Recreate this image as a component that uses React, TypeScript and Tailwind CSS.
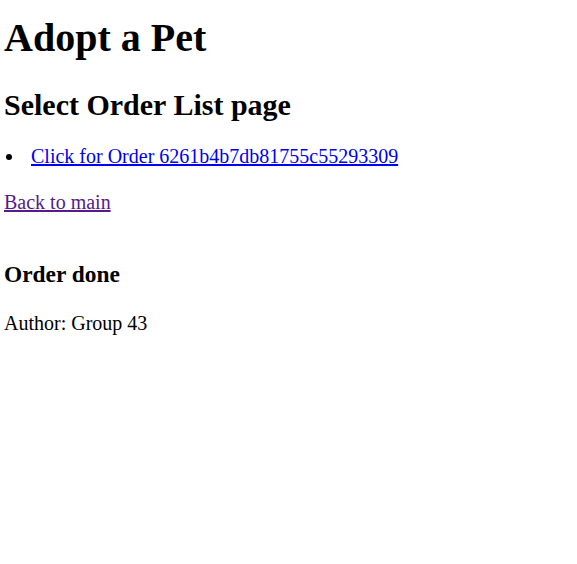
export default function App() {
  return (
    <div className="bg-white min-h-screen text-black pl-[4px] pt-[15px]" style={{ fontFamily: '"Liberation Serif", "Times New Roman", serif' }}>
      <h1 className="text-[40px] font-bold leading-[46px] m-0">Adopt a Pet</h1>
      <h2 className="text-[30px] font-bold leading-[35px] mt-[26px]">Select Order List page</h2>
      <ul className="mt-[23px] text-[20px] leading-[23px]">
        <li className="flex items-center">
          <span className="ml-[2px] w-[6px] h-[6px] rounded-full bg-black shrink-0" />
          <a href="#" className="ml-[19px] text-[#0000ee] underline">Click for Order 6261b4b7db81755c55293309</a>
        </li>
      </ul>
      <p className="mt-[23px] text-[20px] leading-[23px]">
        <a href="#" className="text-[#551a8b] underline">Back to main</a>
      </p>
      <h3 className="mt-[47px] text-[23.4px] font-bold leading-[27px]">Order done</h3>
      <p className="mt-[24px] text-[20px] leading-[23px]">Author: Group 43</p>
    </div>
  );
}
